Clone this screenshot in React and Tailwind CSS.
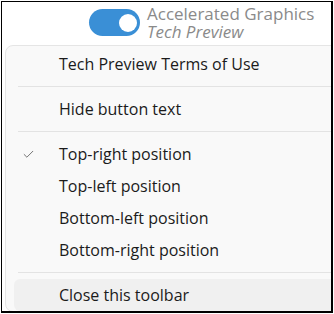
import { Check } from 'lucide-react';

const font = { fontFamily: '"Open Sans", "Noto Sans", sans-serif' };

function MenuItem({ label, checked, active }) {
  return (
    <div
      className={`flex items-center h-8 ml-2 rounded-md ${active ? 'bg-[#f0f0f0]' : ''}`}
    >
      <div className="w-[45px] pl-[8px] flex items-center">
        {checked && <Check size={13} strokeWidth={1.6} className="text-[#5f5f5f]" />}
      </div>
      <span className="text-[16px] text-[#1b1b1b]">{label}</span>
    </div>
  );
}

function Separator() {
  return <div className="ml-3 my-[6px] h-px bg-[#e3e3e3]" />;
}

export default function App() {
  return (
    <div className="w-[334px] h-[314px] bg-white pl-px pt-px" style={font}>
      <div className="w-[332px] h-[312px] border-l border-t border-r-2 border-b-2 border-black overflow-hidden bg-white">
        <div className="flex items-start pt-[5px] pl-[87px] h-[43px]">
          <div className="mt-[2px] w-[51px] h-[27px] rounded-full bg-[#3a8fd6] flex items-center justify-end pr-[3px]">
            <div className="w-[18px] h-[18px] rounded-full bg-white" />
          </div>
          <div className="ml-[7px] -mt-[2px] text-[#8a8a8a]">
            <div className="text-[17px] leading-[18px]">Accelerated Graphics</div>
            <div className="text-[17px] leading-[18px] italic">Tech Preview</div>
          </div>
        </div>
        <div className="ml-[3px] w-[360px] h-[267px] bg-[#f9f9f9] border border-[#e5e5e5] rounded-lg pt-[2px]">
          <MenuItem label="Tech Preview Terms of Use" />
          <Separator />
          <MenuItem label="Hide button text" />
          <Separator />
          <MenuItem label="Top-right position" checked />
          <MenuItem label="Top-left position" />
          <MenuItem label="Bottom-left position" />
          <MenuItem label="Bottom-right position" />
          <Separator />
          <MenuItem label="Close this toolbar" active />
        </div>
      </div>
    </div>
  );
}
